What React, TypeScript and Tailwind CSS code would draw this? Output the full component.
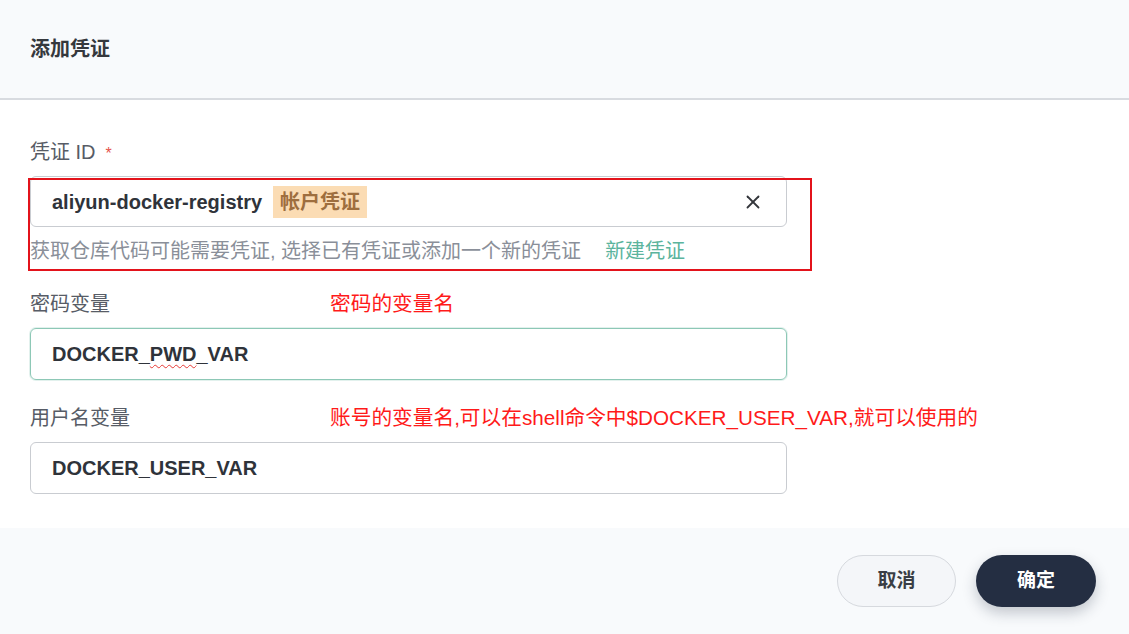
import React from "react";
import { X } from "lucide-react";

const font = { fontFamily: '"Liberation Sans", "Noto Sans CJK SC", sans-serif' };

const Label = ({ text, required, note }: { text: string; required?: boolean; note?: string }) => (
  <div className="flex h-[24px] items-center">
    <div className="w-[300px] shrink-0 text-[20px] text-[#575c66]">
      {text}
      {required && <span className="ml-[10px] text-[16px] text-[#e5534b]">*</span>}
    </div>
    {note && <div className="text-[20.7px] text-[#ff1a1a] whitespace-nowrap">{note}</div>}
  </div>
);

export default function App() {
  return (
    <div className="flex h-[634px] w-[1129px] flex-col overflow-hidden bg-white" style={font}>
      {/* header */}
      <div className="flex h-[100px] shrink-0 items-center border-b-2 border-[#d8dbe0] bg-[#f8fafc] px-[30px]">
        <h1 className="text-[20px] font-bold text-[#35383d]">添加凭证</h1>
      </div>

      {/* body */}
      <div className="flex-1 px-[30px] pt-[40px]">
        <Label text="凭证 ID" required />
        <div className="relative mt-[12px]">
          <div className="flex h-[51px] w-[757px] items-center rounded-[6px] border border-[#c9ccd1] pl-[21px] pr-[22px]">
            <span className="text-[20px] font-bold text-[#2f333a]">aliyun-docker-registry</span>
            <span className="ml-[11px] flex h-[32px] items-center bg-[#fbdcb4] px-[7px] text-[20px] font-bold text-[#9e6e3e]">
              帐户凭证
            </span>
            <X className="ml-auto h-[22px] w-[22px] text-[#33363b]" strokeWidth={2} />
          </div>
          <div className="flex h-[24px] items-center mt-[12px] text-[20px] text-[#8a8f99]">
            获取仓库代码可能需要凭证, 选择已有凭证或添加一个新的凭证
            <span className="ml-[24px] text-[#5bb49d]">新建凭证</span>
          </div>
          {/* annotation frame */}
          <div className="pointer-events-none absolute left-[-2px] top-[2px] h-[93px] w-[784px] border-2 border-[#e3131b]" />
        </div>

        <div className="mt-[29px]">
          <Label text="密码变量" note="密码的变量名" />
        </div>
        <div className="mt-[12px] flex h-[52px] w-[757px] items-center rounded-[6px] border border-[#8dc8b6] pl-[21px] shadow-[0_0_0_1px_rgba(141,200,182,0.25)]">
          <span className="text-[20px] font-semibold text-[#2f333a]">
            DOCKER_
            <span className="underline decoration-wavy decoration-[#e53935] decoration-1 underline-offset-[3px]">PWD</span>
            _VAR
          </span>
        </div>

        <div className="mt-[26px]">
          <Label text="用户名变量" note="账号的变量名,可以在shell命令中$DOCKER_USER_VAR,就可以使用的" />
        </div>
        <div className="mt-[12px] flex h-[52px] w-[757px] items-center rounded-[6px] border border-[#c9ccd1] pl-[21px]">
          <span className="text-[20px] font-semibold text-[#2f333a]">DOCKER_USER_VAR</span>
        </div>
      </div>

      {/* footer */}
      <div className="flex h-[106px] shrink-0 items-center justify-end gap-[20px] bg-[#f8fafc] pr-[33px]">
        <button className="h-[52px] w-[119px] rounded-full border border-[#d6d9de] bg-[#f4f6f9] text-[19px] font-bold text-[#3a3e45]">
          取消
        </button>
        <button className="h-[52px] w-[120px] rounded-full bg-[#242e42] text-[19px] font-bold text-white shadow-[0_6px_14px_rgba(36,46,66,0.25)]">
          确定
        </button>
      </div>
    </div>
  );
}
